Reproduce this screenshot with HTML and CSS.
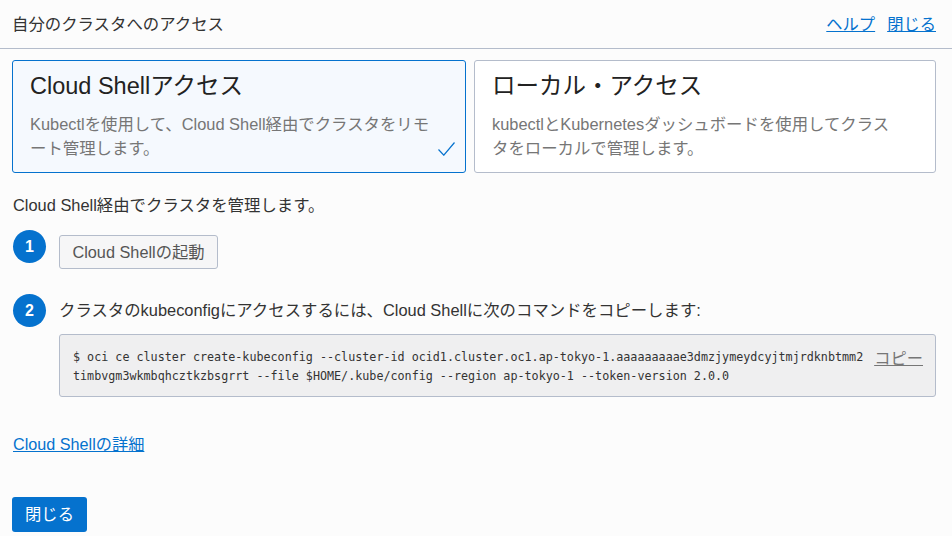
FILE: index.html
```html
<!DOCTYPE html>
<html lang="ja">
<head>
<meta charset="utf-8">
<title>自分のクラスタへのアクセス</title>
<link rel="stylesheet" href="styles.css">
</head>
<body>
<header class="top">
  <h1 class="title">自分のクラスタへのアクセス</h1>
  <nav class="top-links"><a href="#">ヘルプ</a><a href="#">閉じる</a></nav>
</header>
<main class="content">
  <div class="cards">
    <div class="card selected">
      <h2>Cloud Shellアクセス</h2>
      <p>Kubectlを使用して、Cloud Shell経由でクラスタをリモート管理します。</p>
      <svg class="check" width="17" height="14" viewBox="0 0 17 14"><path d="M0.500 7.500L5.800 13.200L16.500 0.500" fill="none" stroke="#0572ce" stroke-width="1.200"/></svg>
    </div>
    <div class="card">
      <h2>ローカル・アクセス</h2>
      <p>kubectlとKubernetesダッシュボードを使用してクラスタをローカルで管理します。</p>
    </div>
  </div>
  <p class="intro">Cloud Shell経由でクラスタを管理します。</p>
  <div class="step step-one">
    <span class="num">1</span>
    <div class="step-body"><button class="btn">Cloud Shellの起動</button></div>
  </div>
  <div class="step">
    <span class="num">2</span>
    <div class="step-body">
      <p class="step-text">クラスタのkubeconfigにアクセスするには、Cloud Shellに次のコマンドをコピーします:</p>
      <div class="code">
        <code>$ oci ce cluster create-kubeconfig --cluster-id ocid1.cluster.oc1.ap-tokyo-1.aaaaaaaaae3dmzjymeydcyjtmjrdknbtmm2 timbvgm3wkmbqhcztkzbsgrrt --file $HOME/.kube/config --region ap-tokyo-1 --token-version 2.0.0</code>
        <a href="#" class="copy">コピー</a>
      </div>
    </div>
  </div>
  <a href="#" class="more">Cloud Shellの詳細</a>
  <button class="close">閉じる</button>
</main>
</body>
</html>
```
FILE: styles.css
```css
* { box-sizing: border-box; }
html, body { margin: 0; height: 100%; }
body {
  background: #fcfcfc;
  color: #333;
  font-family: "Liberation Sans", "Noto Sans CJK JP", sans-serif;
  font-size: 16.300px;
  overflow: hidden;
}
a { color: #0572ce; }
p, h1, h2 { margin: 0; font-weight: 400; }
.top {
  height: 49px;
  padding: 0 16px 0 12px;
  display: flex;
  align-items: center;
  justify-content: space-between;
  border-bottom: 1px solid #b4bccb;
}
.title { font-size: 16.400px; line-height: 20px; color: #333; }
.top-links { display: flex; gap: 12px; margin-top: -3px; }
.content { padding: 11px 16px 0 12px; }
.cards { display: grid; grid-template-columns: 454px 462px; gap: 8px; }
.card {
  position: relative;
  height: 113px;
  padding: 9px 17px;
  background: #fff;
  border: 1px solid #b4bccb;
  border-radius: 3px;
}
.card.selected { background: #f5f9fe; border-color: #0572ce; }
.card h2 { font-size: 23.500px; line-height: 32px; color: #222; }
.card p { margin-top: 10px; font-size: 16.400px; line-height: 24px; color: #767676; max-width: 405px; }
.check { position: absolute; right: 10px; bottom: 16px; }
.intro { margin-top: 21px; padding-left: 1px; font-size: 16.400px; line-height: 22px; }
.step { display: flex; gap: 13px; padding-left: 1px; }
.step-one { margin-top: 14px; height: 64px; }
.num {
  flex: none;
  width: 33px;
  height: 33px;
  border-radius: 50%;
  background: #0572ce;
  color: #fff;
  font-weight: 700;
  font-size: 16px;
  line-height: 33px;
  text-align: center;
}
.step-body { flex: 1; min-width: 0; }
.btn {
  display: block;
  margin-top: 5px;
  width: 159px;
  height: 34px;
  padding: 0 0 2px;
  font: inherit;
  color: #555;
  background: #f6f6f7;
  border: 1px solid #b4bccb;
  border-radius: 3px;
}
.step-text { font-size: 16.400px; line-height: 22px; margin-top: 5px; }
.code {
  margin-top: 13px;
  height: 63px;
  padding: 13px 12px 13px 13px;
  background: #efeff0;
  border: 1px solid #b4bccb;
  border-radius: 3px;
  display: flex;
  justify-content: space-between;
}
.code code {
  flex: none;
  font-family: "DejaVu Sans Mono", monospace;
  font-size: 11.730px;
  line-height: 19px;
  color: #333;
  word-break: break-all;
  width: 792px;
}
.copy { color: #767676; flex: none; line-height: 20px; white-space: nowrap; }
.more { display: table; margin-top: 36px; font-size: 16.200px; line-height: 22px; padding-left: 1px; }
.close {
  display: block;
  margin-top: 42px;
  width: 75px;
  height: 35px;
  padding: 0 0 4px;
  font: inherit;
  color: #fff;
  background: #0572ce;
  border: 0;
  border-radius: 3px;
}
```
